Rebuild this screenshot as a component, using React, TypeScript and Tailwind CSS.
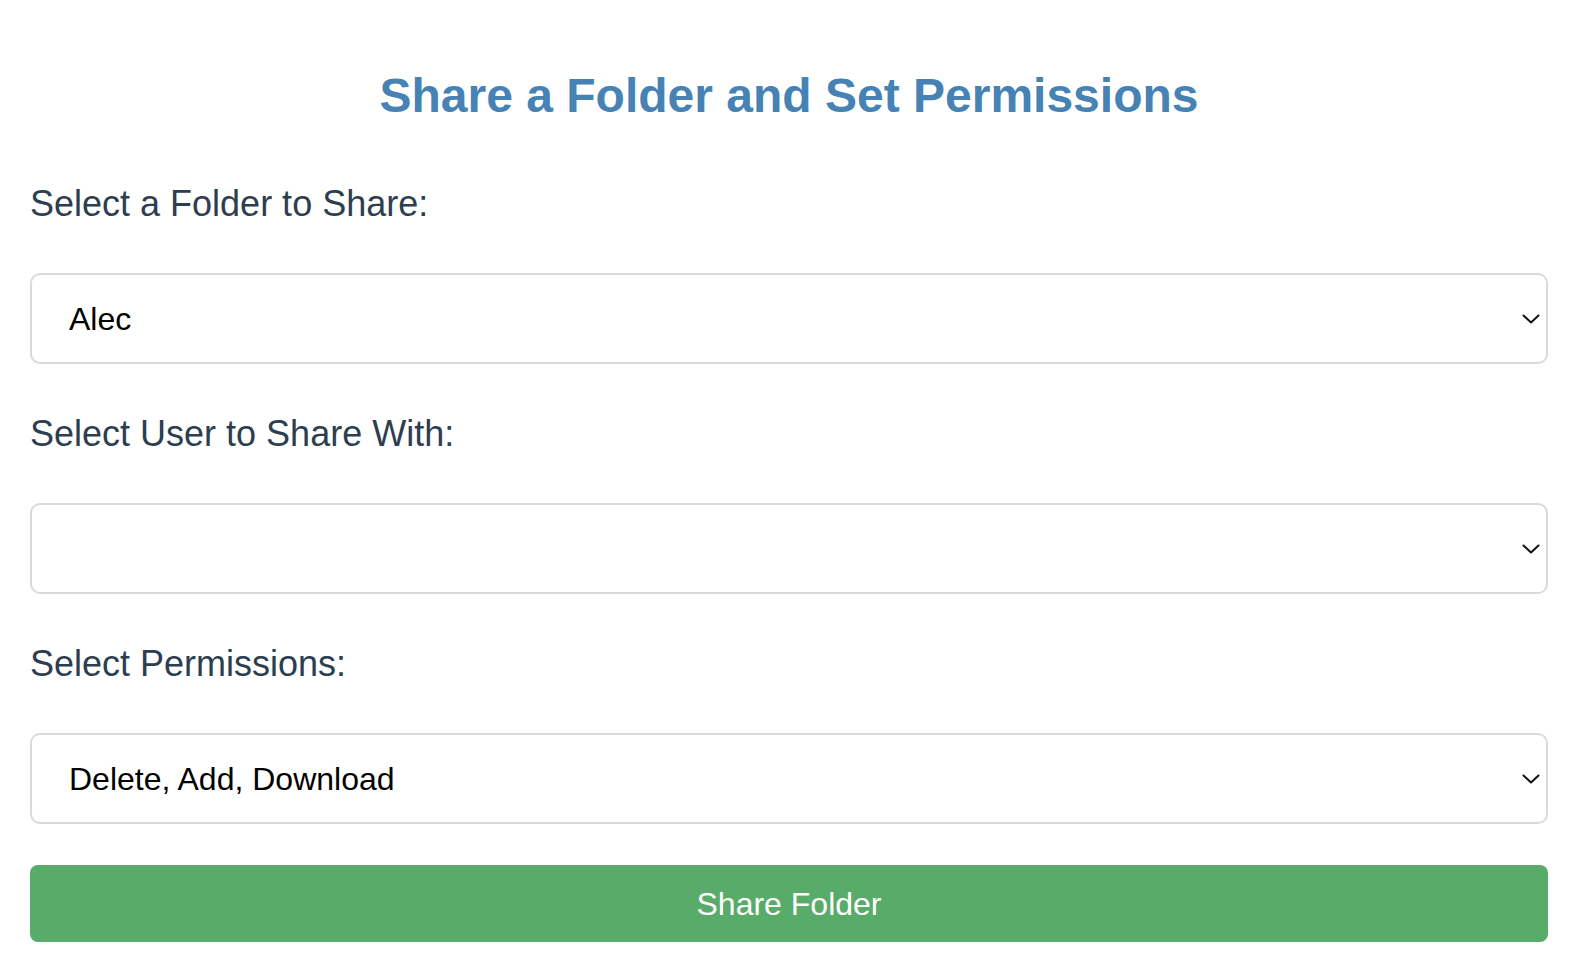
import { useState } from 'react';

const font = { fontFamily: '"Liberation Sans", Arial, Helvetica, sans-serif' };

const Chevron = () => (
    <svg className="pointer-events-none absolute right-[8px] top-1/2 -translate-y-1/2" width="18" height="10" viewBox="0 0 18 10" fill="none">
        <path d="M1.5 1.5 L9 8.5 L16.5 1.5" stroke="#111" strokeWidth="2" strokeLinecap="round" strokeLinejoin="round" />
    </svg>
)

type FieldProps = {
    label: string;
    value: string;
    options: string[];
    onChange: (v: string) => void;
    last?: boolean;
}

const Field = ({ label, value, options, onChange, last }: FieldProps) => {
    return (
        <>
            <label className="block text-[36px] leading-[41px] text-[#2c3e50] mb-[49px]">{label}</label>
            <div className={"relative " + (last ? "mb-[41px]" : "mb-[49px]")}>
                <select
                    value={value}
                    onChange={(e) => onChange(e.target.value)}
                    className="appearance-none w-full h-[91px] border-2 border-[#dadada] rounded-[10px] bg-white pl-[37px] pr-[40px] text-[32px] text-black outline-none"
                    style={font}
                >
                    {options.map((o) => (
                        <option key={o} value={o}>{o}</option>
                    ))}
                </select>
                <Chevron />
            </div>
        </>
    )
}

export default function App() {
    const [folder, setFolder] = useState('Alec');
    const [user, setUser] = useState('');
    const [perm, setPerm] = useState('Delete, Add, Download');

    return (
        <div className="min-h-screen bg-white pt-[68px] pl-[30px] pr-[34px]" style={font}>
            <h1 className="text-center text-[48px] leading-[55px] font-bold text-[#4682b4] mb-[60px]">
                Share a Folder and Set Permissions
            </h1>
            <Field label="Select a Folder to Share:" value={folder} options={['Alec', 'Documents', 'Photos']} onChange={setFolder} />
            <Field label="Select User to Share With:" value={user} options={['', 'john', 'mary']} onChange={setUser} />
            <Field label="Select Permissions:" value={perm} options={['Delete, Add, Download', 'Download', 'Add, Download']} onChange={setPerm} last />
            <button className="w-full h-[77px] rounded-[8px] bg-[#58ab69] text-white text-[32px]">
                Share Folder
            </button>
        </div>
    )
}
